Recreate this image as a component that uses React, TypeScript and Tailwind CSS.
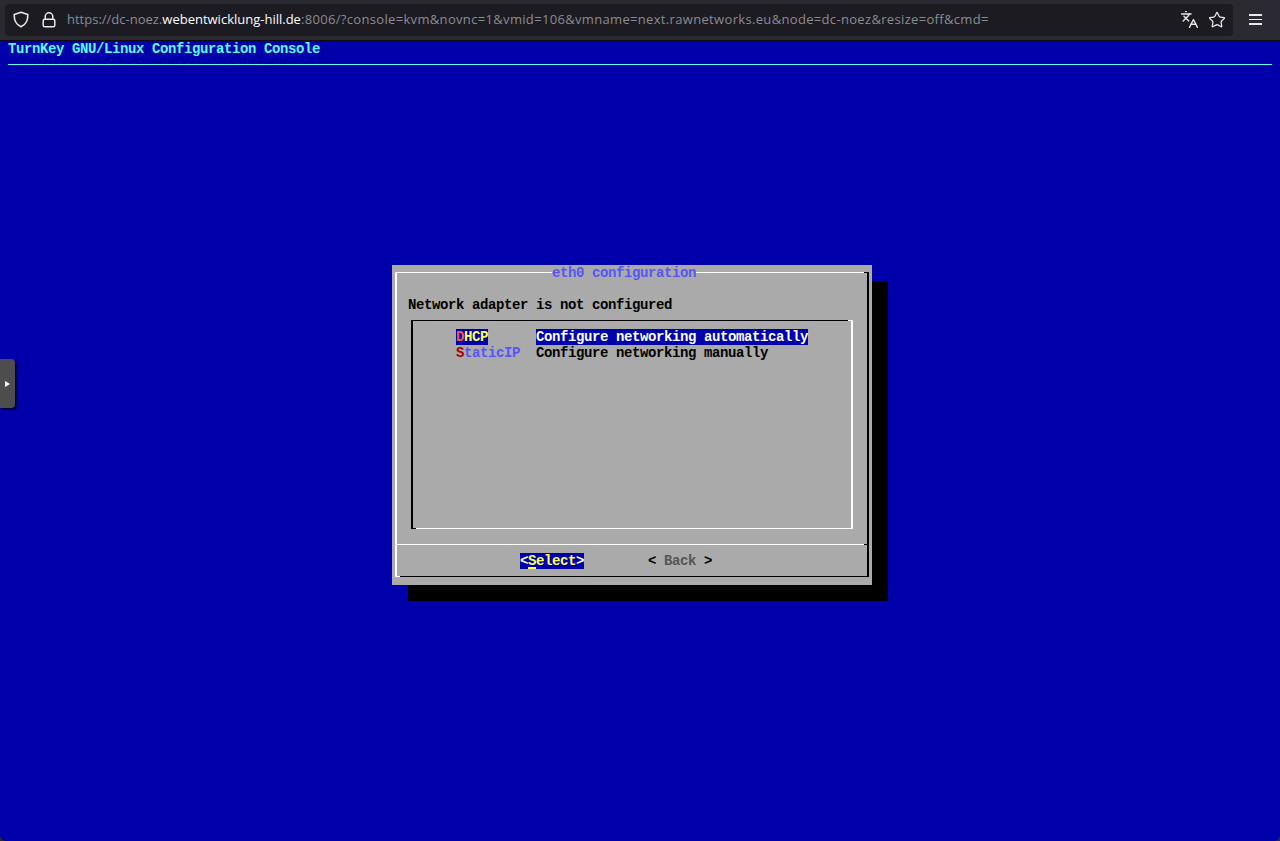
import { Languages, Star } from 'lucide-react';

function ShieldIcon() {
  return (
    <svg width="16" height="17" viewBox="0 0 16 17" fill="none" stroke="#e8e8ea" strokeWidth="1.6">
      <path d="M8 1.2 14.8 3.4C15 9 13.6 13.4 8 15.8 2.4 13.4 1 9 1.2 3.4Z" strokeLinejoin="round" />
    </svg>
  );
}

function LockIcon() {
  return (
    <svg width="14" height="16" viewBox="0 0 14 16" fill="none" stroke="#e8e8ea" strokeWidth="1.5">
      <rect x="1.2" y="7.2" width="11.6" height="7.6" rx="1.6" />
      <path d="M3.2 7V4.6a3.8 3.8 0 0 1 7.6 0V7" />
    </svg>
  );
}

function BrowserBar() {
  return (
    <header className="flex h-[41px] shrink-0 items-center border-b border-[#0c0c10] bg-[#2b2a33] pb-[1px] pl-[5px] pr-[18px]">
      <div className="flex h-[32px] w-[1228px] items-center rounded-[4px] bg-[#1c1b22] pl-2 pr-[7px]">
        <ShieldIcon />
        <div className="ml-[13px]">
          <LockIcon />
        </div>
        <p className="ml-[11px] flex-1 whitespace-pre font-['Open_Sans',sans-serif] text-[13px] text-[#8b8b92]">
          https://dc-noez.<span className="text-[#fbfbfe]">webentwicklung-hill.de</span>
          <span className="tracking-[0.33px]">:8006/?console=kvm&novnc=1&vmid=106&vmname=next.rawnetworks.eu&node=dc-noez&resize=off&cmd=</span>
        </p>
        <Languages className="h-[19px] w-[19px] text-[#e8e8ea]" strokeWidth={1.7} />
        <Star className="ml-[9px] h-[18px] w-[18px] text-[#e8e8ea]" strokeWidth={1.7} />
      </div>
      <div className="ml-[16px] flex w-[13px] flex-col gap-[3px]">
        <div className="h-[1.5px] bg-[#e8e8ea]" />
        <div className="h-[1.5px] bg-[#e8e8ea]" />
        <div className="h-[1.5px] bg-[#e8e8ea]" />
      </div>
    </header>
  );
}

function Dialog() {
  return (
    <div className="ml-[392px] mt-[200px] h-[320px] w-[480px] bg-[#aaaaaa] pb-[8px] pl-[3px] pr-[3px] pt-[7px] shadow-[16px_16px_0_#000]">
      {/* Outer frame */}
      <div className="relative flex h-[305px] flex-col border-b border-l-2 border-r-2 border-t border-b-black border-l-white border-r-black border-t-white">
        <div className="absolute right-[-2px] top-[-1px] h-[1px] w-[5px] bg-black" />
        <div className="absolute bottom-[-1px] left-[-2px] h-[1px] w-[5px] bg-white" />
        <div className="absolute left-[155px] top-[-8px] bg-[#aaaaaa] text-[#5555ff]">eth0 configuration</div>

        <p className="ml-[11px] mt-[24px] text-black">Network adapter is not configured</p>

        {/* Menu box */}
        <div className="relative ml-[14px] mt-[7px] h-[209px] w-[442px] border-b border-l-2 border-r-2 border-t border-b-white border-l-black border-r-white border-t-black pl-[43px] pt-[8px]">
          <div className="absolute right-[-2px] top-[-1px] h-[1px] w-[5px] bg-white" />
          <div className="absolute bottom-[-1px] left-[-2px] h-[1px] w-[5px] bg-black" />
          <div className="flex">
            <div className="w-[80px]">
              <span className="bg-[#0000aa] text-[#ffff55]">
                <span className="text-[#ff5555]">D</span>HCP
              </span>
            </div>
            <span className="bg-[#0000aa] text-white">Configure networking automatically</span>
          </div>
          <div className="flex">
            <div className="w-[80px] text-[#5555ff]">
              <span className="text-[#aa0000]">S</span>taticIP
            </div>
            <span className="text-black">Configure networking manually</span>
          </div>
        </div>

        {/* Separator */}
        <div className="mt-[15px] flex h-[1px]">
          <div className="flex-1 bg-white" />
          <div className="w-[3px] bg-black" />
        </div>

        {/* Buttons */}
        <div className="ml-[123px] mt-[8px] flex gap-[64px]">
          <div className="bg-[#0000aa] text-white">
            {'<'}
            <span className="relative text-[#ffff55]">
              S
              <span className="absolute bottom-0 left-0 h-[2px] w-[8px] bg-[#ffff55]" />
            </span>
            <span className="text-[#ffff55]">elect</span>
            {'>'}
          </div>
          <div className="text-black">
            {'< '}
            <span className="text-[#555555]">Back</span>
            {' >'}
          </div>
        </div>
      </div>
    </div>
  );
}

export default function App() {
  return (
    <div className="flex h-[841px] w-[1280px] flex-col overflow-hidden bg-[#2b2a33]">
      <BrowserBar />
      <main className="relative flex-1 whitespace-pre rounded-b-[6px] bg-[#0000aa] font-['Liberation_Mono',monospace] text-[14px] font-bold leading-[16px] tracking-[-0.4px]">
        <div className="pl-2 text-[#55ffff]">TurnKey GNU/Linux Configuration Console</div>
        <div className="ml-2 mr-2 mt-[7px] h-[1px] bg-[#55ffff]" />
        <Dialog />
        {/* noVNC side handle */}
        <div className="absolute left-0 top-[318px] flex h-[49px] w-[15px] items-center justify-end rounded-r-[4px] bg-[#4d4d4d] pr-[5px] shadow-[2px_2px_2px_rgba(0,0,0,0.6)]">
          <svg width="5" height="6" viewBox="0 0 5 6">
            <path d="M0 0 5 3 0 6Z" fill="#fff" />
          </svg>
        </div>
      </main>
    </div>
  );
}
